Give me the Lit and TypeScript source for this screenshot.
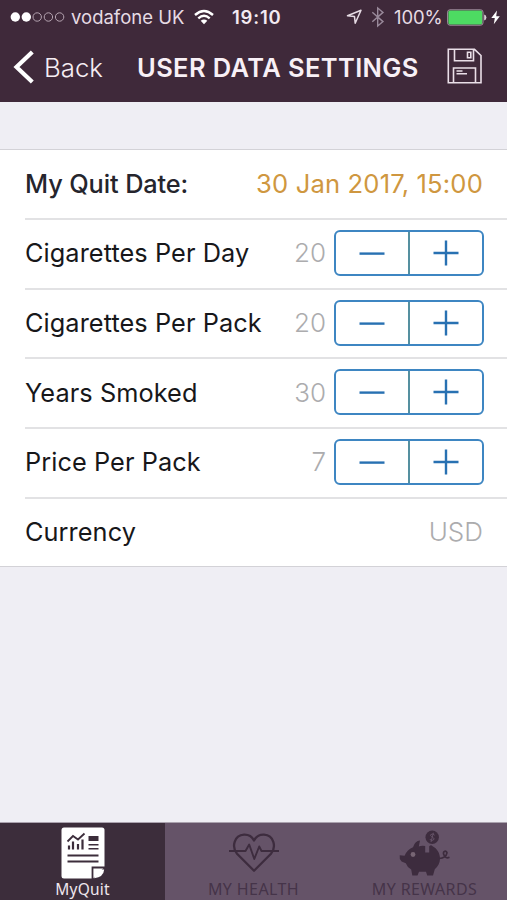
import { LitElement, html, css, svg, nothing } from "lit";
import { customElement, property } from "lit/decorators.js";

@customElement("status-bar")
class StatusBar extends LitElement {
  static styles = css`
    :host { display: grid; height: 34px; align-items: center; color: #f3e9f1; white-space: nowrap;
      grid-template-columns: 10px 61px 123px 38px 114px 25px 23px 53px 44px 16px; }
    svg { display: block; overflow: visible; }
    .carrier, .percent { font-size: 18.5px; color: #e6dbe4; }
    .carrier { letter-spacing: 0; }
    .percent { letter-spacing: -0.1px; }
    .time { font-size: 18.5px; font-weight: 600; letter-spacing: 0.8px; }
  `;
  render() {
    return html`
      <span></span>
      <svg width="56" height="12" viewBox="0 0 56 12">
        <circle cx="5.3" cy="6" r="4.7" fill="#fff"/><circle cx="16.3" cy="6" r="4.7" fill="#fff"/>
        ${[27.2, 38.4, 49.6].map(x => svg`<circle cx=${x} cy="6" r="4.2" fill="none" stroke="#b5a4b1" stroke-width="1"/>`)}
      </svg>
      <span class="carrier">vodafone UK</span>
      <svg width="20" height="16" viewBox="0 0 20 16" fill="none" stroke="#fff" stroke-width="2.4">
        <path d="M1 6Q10-2 19 6M4.3 9.4Q10 4.3 15.7 9.4"/><path d="M6.7 11.8Q10 9 13.3 11.8L10 15.3Z" fill="#fff" stroke="none"/>
      </svg>
      <span class="time">19:10</span>
      <svg width="17" height="17" viewBox="0 0 17 17" fill="none" stroke="#e6dbe4" stroke-width="1.5" stroke-linejoin="round">
        <path d="M1.5 6.8L15 1.2 9.2 14.2 8.5 7.6Z"/>
      </svg>
      <svg width="14" height="20" viewBox="0 0 14 20" fill="none" stroke="#99899a" stroke-width="1.4">
        <path d="M1.3 5.2L12 14.6 6.7 19V1L12 5.4 1.3 14.8"/>
      </svg>
      <span class="percent">100%</span>
      <svg width="40" height="17" viewBox="0 0 40 17">
        <rect x=".6" y=".8" width="35.4" height="15.4" rx="2.4" fill="#3f293a" stroke="#a391a0" stroke-width="1"/>
        <rect x="1.4" y="1.6" width="33.8" height="13.8" rx="1.6" fill="#4ddb62"/>
        <path d="M37.2 5.6Q39.4 6 39.4 8.5T37.2 11.4Z" fill="#d9ced7"/>
      </svg>
      <svg width="9" height="15" viewBox="0 0 9 15" fill="#fff"><path d="M6 .5L.3 8H3.8L2.8 14.3 8.8 6.3H5.2Z"/></svg>
    `;
  }
}

@customElement("value-stepper")
class ValueStepper extends LitElement {
  static styles = css`
    :host { display: grid; grid-template-columns: 74px 1fr; box-sizing: border-box; width: 150px; height: 46px;
      border: 2px solid #3e86c2; border-radius: 6px; }
    button { border: 0; padding: 0; background: none; display: grid; place-items: center; }
    .minus { border-right: 2px solid #5590a0; }
    svg { display: block; }
  `;
  render() {
    return html`
      <button class="minus"><svg width="26" height="26" viewBox="0 0 26 26"><path d="M.5 13.6H25.5" stroke="#2871b2" stroke-width="2.4"/></svg></button>
      <button><svg width="26" height="26" viewBox="0 0 26 26"><path d="M.5 13H25.5M13 .5V25.5" stroke="#2871b2" stroke-width="2.4"/></svg></button>
    `;
  }
}

@customElement("setting-row")
class SettingRow extends LitElement {
  @property() label = "";
  @property() value = "";
  @property() kind = "plain";
  static styles = css`
    :host { display: block; padding-left: 25px; }
    .row { display: flex; align-items: center; height: 69.7px; box-sizing: border-box; padding: 0 24px 2px 0;
      border-top: 2px solid #e2e2e4; white-space: nowrap; font-size: 25.3px; color: #17171a; }
    .date { height: 68px; border-top: 0; }
    .label { flex: 1; letter-spacing: 0.08px; }
    .date .label { font-weight: 550; color: #25252d; letter-spacing: -0.1px; }
    .value { color: #acacae; font-weight: 300; font-size: 26px; }
    .date .value { color: #cf9740; font-weight: 400; font-size: 25.6px; letter-spacing: 0.16px; }
    .stepper { padding-right: 23px; }
    .stepper .value { margin-right: 8px; }
  `;
  render() {
    return html`<div class="row ${this.kind}">
      <span class="label">${this.label}</span><span class="value">${this.value}</span>
      ${this.kind === "stepper" ? html`<value-stepper></value-stepper>` : nothing}
    </div>`;
  }
}

const reportIcon = html`<svg width="44" height="52" viewBox="0 0 44 52">
  <path d="M3 .5H41Q43.5.5 43.5 3V40L32 51.5H3Q.5 51.5.5 49V3Q.5.5 3 .5Z" fill="#fff"/>
  <path d="M31.5 52V40.5H44" fill="none" stroke="#3c2d3b" stroke-width="1.8"/>
  <path d="M33.3 51.3V42.4H43.2Q42.5 50 33.3 51.3Z" fill="#fff"/>
  <g fill="none" stroke="#3c2d3b">
    <path d="M6.5 14.5L12 9 17 12.5 23.5 6.5" stroke-width="1.8"/>
    <path d="M8 22.5V18.5M12 22.5V14.5M17 22.5V17M21.5 22.5V12.5" stroke-width="2.2"/>
    <path d="M6.5 28.5H37.5M6.5 34.5H37.5" stroke-width="1.8"/>
    <path d="M27.5 17.7H37.5M27.5 21.7H37.5" stroke-width="1.4"/>
  </g>
  <path d="M27.5 9H37.5V14H27.5Z" fill="#3c2d3b"/>
</svg>`;

const heartIcon = html`<svg width="50" height="40" viewBox="0 0 50 40" fill="none" stroke="#3d2c3e" stroke-linejoin="round">
  <path d="M25 37.8L8 20.8C2.5 14 5 2.2 15 1.7C20 1.5 23.2 4 25 7.5C26.8 4 30 1.5 35 1.7C45 2.2 47.5 14 42 20.8Z" stroke-width="2.3"/>
  <path d="M0 18H16.5L20.2 11.5 25.3 26 30.2 13.5 32.5 18H50" stroke-width="1.9"/>
</svg>`;

const pigIcon = html`<svg width="51" height="47" viewBox="0 0 51 47">
  <circle cx="33.2" cy="7.3" r="6.7" fill="#3d2c3e"/>
  <path d="M35.6 5.2Q33.8 3 31.8 4.6C30.3 6.5 35.8 7.3 35 9.4Q33.5 11.5 30.8 9.5M34.4 2.8L32 12" fill="none" stroke="#655368" stroke-width="1"/>
  <path d="M21 10.5L19.8 16.4Q22.5 15.5 26.2 16V22.5H30.2V16.3Q32 14.5 33.6 16.2C38 18.5 41 23 41 28.5C41 33 39 36.5 35.8 39.3L34 45.5H28.2L27 41.8H20L18.5 45.5H13.3L12.2 39.5Q8.2 37.4 6.8 33.3L2.6 31.5Q0 28.8.7 25.3L5.6 25.7Q7.7 20 14 17.2Q15.8 11 21 10.5Z" fill="#3d2c3e"/>
  <circle cx="14" cy="24.5" r="2.4" fill="#776574"/>
  <path d="M40 28.5Q47 27.8 48 22.8C47 19.7 43 21.6 45 25Q46.5 29 50.5 27.3" fill="none" stroke="#3d2c3e" stroke-width="1.7"/>
</svg>`;

@customElement("app-root")
class AppRoot extends LitElement {
  static styles = css`
    :host { display: flex; flex-direction: column; height: 900px; width: 507px; overflow: hidden; background: #efeef4;
      font-family: Inter, "Liberation Sans", sans-serif; }
    header { height: 102px; background: #3f293a; }
    .nav { display: grid; grid-template-columns: 13px 31px 93px 310px 1fr; align-items: center; height: 66px; color: #fff; white-space: nowrap; }
    .back { font-size: 25.8px; font-weight: 350; color: #f5edf3; }
    .title { font-size: 25.5px; font-weight: 600; color: #f8f0f6; letter-spacing: 0.38px; padding-top: 1px; }
    svg { display: block; overflow: visible; }
    .list { margin-top: 47px; background: #fff; border-top: 1px solid #d3d2d7; border-bottom: 1px solid #d3d2d7; }
    .tabs { margin-top: auto; height: 77px; display: grid; grid-template-columns: 165px 177px 165px; background: #655368;
      box-shadow: 0 -1px 0 #aaa2ae; }
    .tab { display: flex; flex-direction: column; align-items: center; box-sizing: border-box; color: #453449;
      font-family: "Noto Sans", sans-serif; font-size: 16px; line-height: 18px; letter-spacing: 0.4px; white-space: nowrap; }
    .tab .icon { height: 57px; box-sizing: border-box; }
    .active { background: #3c2d3b; color: #efe6ed; font-size: 15.5px; letter-spacing: 0.2px; }
    .active .icon { padding-top: 4px; }
    .heart { padding-top: 10px; }
    .pig { padding-top: 7px; }
  `;
  render() {
    return html`
      <header>
        <status-bar></status-bar>
        <div class="nav">
          <span></span>
          <svg width="22" height="34" viewBox="0 0 22 34" fill="none" stroke="#fff" stroke-width="4.2"><path d="M19.3 2L3.5 17 19.3 32"/></svg>
          <span class="back">Back</span>
          <span class="title">USER DATA SETTINGS</span>
          <svg width="36" height="36" viewBox="0 0 36 36" fill="none" stroke="#eadfe8" stroke-width="1.6">
            <path d="M1.3.3H27.5L34 6.5V33.7H1.3ZM7.5.3V11.7H26.5V.3M6.5 33.7V19H28.5V33.7"/>
            <path d="M20.5 3.2H23.8V8.7H20.5Z"/><path d="M9.5 22H15.5M9.5 24.7H20"/>
          </svg>
        </div>
      </header>
      <div class="list">
        <setting-row label="My Quit Date:" value="30 Jan 2017, 15:00" kind="date"></setting-row>
        <setting-row label="Cigarettes Per Day" value="20" kind="stepper"></setting-row>
        <setting-row label="Cigarettes Per Pack" value="20" kind="stepper"></setting-row>
        <setting-row label="Years Smoked" value="30" kind="stepper"></setting-row>
        <setting-row label="Price Per Pack" value="7" kind="stepper"></setting-row>
        <setting-row label="Currency" value="USD"></setting-row>
      </div>
      <div class="tabs">
        <div class="tab active"><div class="icon">${reportIcon}</div>MyQuit</div>
        <div class="tab"><div class="icon heart">${heartIcon}</div>MY HEALTH</div>
        <div class="tab"><div class="icon pig">${pigIcon}</div>MY REWARDS</div>
      </div>
    `;
  }
}
